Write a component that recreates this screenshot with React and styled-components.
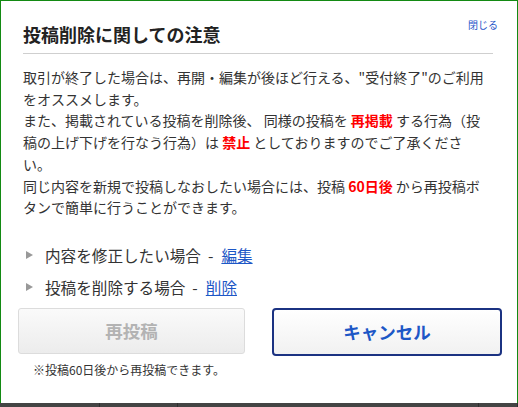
import React from 'react'
import styled, { createGlobalStyle } from 'styled-components'

const GlobalStyle = createGlobalStyle`
  html, body {
    margin: 0;
    padding: 0;
    background: #fff;
  }
  body {
    font-family: "Noto Sans CJK JP", "Noto Sans", sans-serif;
    color: #333;
  }
`

function App() {
  return (
    <>
      <GlobalStyle />
      <Modal>
        <Header>
          <Title>投稿削除に関しての注意</Title>
          <CloseLink href="#">閉じる</CloseLink>
        </Header>
        <Body>
          <Notice>
            取引が終了した場合は、再開・編集が後ほど行える、"受付終了"のご利用<br />
            をオススメします。<br />
            また、掲載されている投稿を削除後、 同様の投稿を <Strong>再掲載</Strong> する行為（投<br />
            稿の上げ下げを行なう行為）は <Strong>禁止</Strong> としておりますのでご了承くださ<br />
            い。<br />
            同じ内容を新規で投稿しなおしたい場合には、投稿 <Strong>60日後</Strong> から再投稿ボ<br />
            タンで簡単に行うことができます。
          </Notice>
          <Options>
            <Option>
              <Arrow />
              内容を修正したい場合<Dash>-</Dash><TextLink href="#">編集</TextLink>
            </Option>
            <Option>
              <Arrow />
              投稿を削除する場合<Dash>-</Dash><TextLink href="#">削除</TextLink>
            </Option>
          </Options>
        </Body>
        <Actions>
          <Button disabled>再投稿</Button>
          <Button $primary>キャンセル</Button>
        </Actions>
        <Note>※投稿60日後から再投稿できます。</Note>
      </Modal>
      <BottomBar>
        <BarCell $w={100} />
        <BarCell $w={78} />
        <BarCell $w={301} />
        <BarCell $w={39} />
      </BottomBar>
    </>
  )
}

export default App

const Modal = styled.div`
    box-sizing: border-box;
    width: 518px;
    height: 403px;
    border: 1px solid #138a13;
    border-bottom: none;
    background: #fff;
    display: flex;
    flex-direction: column;
`
const Header = styled.div`
    display: flex;
    justify-content: space-between;
    align-items: flex-start;
    margin: 0 24px 0 22px;
    padding-top: 18px;
    height: 34px;
    border-bottom: 1px solid #cfcfcf;
`
const Title = styled.h1`
    margin: 3px 0 0;
    font-size: 18px;
    font-weight: 700;
    line-height: 24px;
    color: #222;
`
const CloseLink = styled.a`
    margin-right: -5px;
    font-size: 10px;
    line-height: 12px;
    color: #2856c8;
    text-decoration: none;
`
const Body = styled.div`
    padding: 13px 20px 0 22px;
`
const Notice = styled.p`
    margin: 0;
    font-size: 14px;
    line-height: 21.7px;
    color: #333;
    white-space: nowrap;
`
const Strong = styled.strong`
    color: #f00;
    font-weight: 700;
`
const Options = styled.ul`
    list-style: none;
    margin: 20px 0 0;
    padding: 0 0 0 3px;
`
const Option = styled.li`
    display: flex;
    align-items: center;
    height: 32px;
    font-size: 15.6px;
    color: #333;
`
const Dash = styled.span`
    margin: 0 8px 0 7px;
`
const Arrow = styled.span`
    width: 0;
    height: 0;
    margin-right: 12px;
    border-top: 4px solid transparent;
    border-bottom: 4px solid transparent;
    border-left: 7px solid #999;
`
const TextLink = styled.a`
    color: #1d57c6;
    text-decoration: underline;
`
const Actions = styled.div`
    display: grid;
    grid-template-columns: 227px 230px;
    column-gap: 27px;
    align-items: start;
    padding: 5px 0 0 17px;
`
const Button = styled.button`
    box-sizing: border-box;
    height: ${p => (p.$primary ? '48px' : '46px')};
    border-radius: ${p => (p.$primary ? '4px' : '3px')};
    border: ${p => (p.$primary ? '2px solid #1b3282' : '1px solid #dcdcdc')};
    background: ${p =>
      p.$primary
        ? 'linear-gradient(#ffffff, #f1f1f1)'
        : 'linear-gradient(#fafafa, #ececec)'};
    color: ${p => (p.$primary ? '#1d57c6' : '#b3b3b3')};
    font-family: inherit;
    font-size: 17.5px;
    font-weight: 700;
    cursor: pointer;
    &:disabled {
        cursor: default;
    }
`
const Note = styled.p`
    margin: 6px 0 0 32px;
    font-size: 12px;
    line-height: 16px;
    color: #333;
`
const BottomBar = styled.div`
    display: flex;
    width: 518px;
    height: 4px;
    background: #444;
`
const BarCell = styled.div`
    box-sizing: border-box;
    width: ${p => p.$w}px;
    height: 4px;
    border-right: 1px solid #2f2f2f;
`
